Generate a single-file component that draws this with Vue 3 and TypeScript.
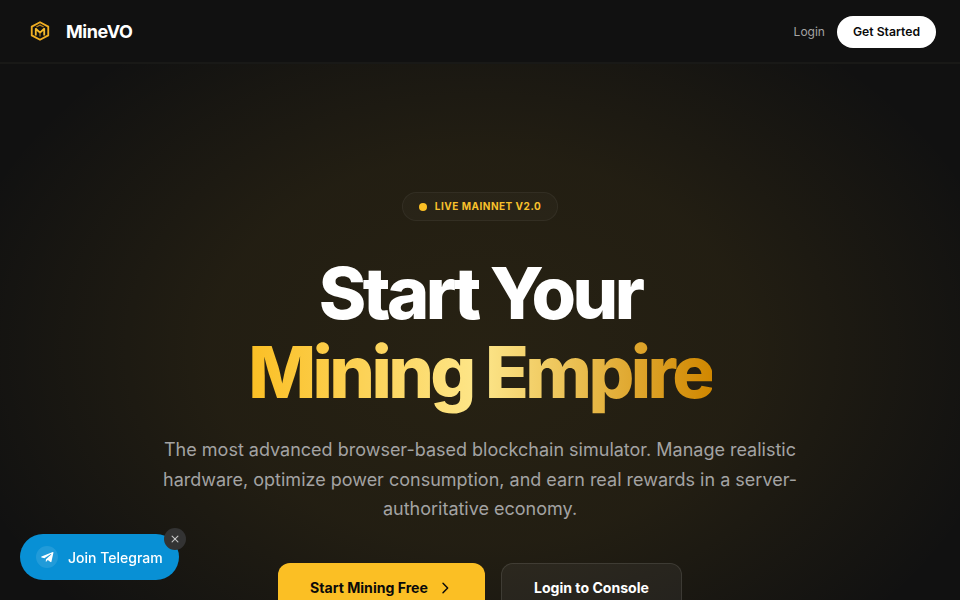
<template>
  <div class="page">
    <div class="glow"></div>
    <header class="nav">
      <a class="brand">
        <svg class="brand-logo" viewBox="0 0 24 24" fill="none">
          <path d="M12 2.5 21 7.2V16.8L12 21.5 3 16.8V7.2Z" stroke="#f0ae22" stroke-width="2" stroke-linejoin="round" />
          <path d="M8 7.6 12 5.6l4 2" stroke="#b8821a" stroke-width="1.4" stroke-linejoin="round" />
          <path d="M7.4 17V9.6L12 13.8l4.6-4.2V17" stroke="#f5bb2c" stroke-width="2" stroke-linejoin="round" />
          <path d="M12 14v4" stroke="#a87614" stroke-width="1.4" />
        </svg>
        <span class="brand-name">MineVO</span>
      </a>
      <div class="nav-actions">
        <a class="nav-login">Login</a>
        <button class="nav-cta">Get Started</button>
      </div>
    </header>

    <main class="hero">
      <div class="badge">
        <span class="badge-dot"></span>
        <span>LIVE MAINNET V2.0</span>
      </div>
      <h1 class="title">
        Start Your<br />
        <span class="title-gold">Mining Empire</span>
      </h1>
      <p class="lead">
        The most advanced browser-based blockchain simulator. Manage realistic hardware, optimize power consumption, and earn real rewards in a server-authoritative economy.
      </p>
      <div class="cta-row">
        <button class="btn btn-primary">
          Start Mining Free
          <svg viewBox="0 0 24 24" width="16" height="16" fill="none" stroke="currentColor" stroke-width="2.2" stroke-linecap="round" stroke-linejoin="round">
            <path d="m9 5 7 7-7 7" />
          </svg>
        </button>
        <button class="btn btn-secondary">Login to Console</button>
      </div>
    </main>

    <div class="telegram">
      <a class="telegram-link">
        <span class="telegram-icon">
          <svg viewBox="0 0 24 24" width="14" height="14" fill="#fff">
            <path d="M22 3.6 2.6 11.1c-.8.3-.8 1.4.1 1.6l4.8 1.5L18.6 7c.5-.3 1 .1.6.5l-9 8.2-.3 4.4c.5 0 .8-.2 1-.5l2.4-2.3 4.7 3.4c.9.5 1.5.2 1.7-.8L23 4.7c.2-1-.3-1.4-1-1.1Z" />
          </svg>
        </span>
        Join Telegram
      </a>
      <button class="telegram-close" aria-label="Close">
        <svg viewBox="0 0 24 24" width="10" height="10" fill="none" stroke="currentColor" stroke-width="2.6" stroke-linecap="round">
          <path d="M5 5l14 14M19 5 5 19" />
        </svg>
      </button>
    </div>
  </div>
</template>

<script setup lang="ts">
</script>

<style>
body {
  background: #111111;
}
</style>

<style scoped>
.page {
  position: relative;
  min-height: 100vh;
  height: 600px;
  overflow: hidden;
  font-family: Inter, "Liberation Sans", sans-serif;
  color: #fff;
}

.glow {
  position: absolute;
  inset: 0;
  background: radial-gradient(ellipse 540px 390px at 50% 350px, rgba(251, 191, 36, 0.095), rgba(251, 191, 36, 0.075) 50%, rgba(251, 191, 36, 0) 100%);
  pointer-events: none;
}

.nav {
  position: relative;
  height: 64px;
  box-sizing: border-box;
  padding: 0 24px;
  display: flex;
  align-items: center;
  justify-content: space-between;
  background: #111111;
  box-shadow: inset 0 -2px 0 #191917;
}

.brand {
  display: flex;
  align-items: center;
  gap: 10px;
  padding-bottom: 2px;
}

.brand-logo {
  width: 32px;
  height: 22px;
}

.brand-name {
  font-size: 18px;
  font-weight: 700;
  letter-spacing: -0.025em;
}

.nav-actions {
  display: flex;
  align-items: center;
  gap: 12px;
}

.nav-login {
  padding-bottom: 1px;
  font-size: 12px;
  font-weight: 400;
  color: #a3a3a3;
}

.nav-cta {
  height: 32px;
  padding: 0 16px 2px;
  border: 0;
  border-radius: 999px;
  background: #fff;
  color: #0a0a0a;
  font: 600 12.2px Inter, sans-serif;
}

.hero {
  position: relative;
  display: flex;
  flex-direction: column;
  align-items: center;
  padding-top: 128px;
  text-align: center;
}

.badge {
  display: flex;
  align-items: center;
  gap: 8px;
  padding: 7px 16px;
  border: 1px solid rgba(255, 255, 255, 0.05);
  border-radius: 999px;
  background: rgba(255, 255, 255, 0.025);
  color: #f8c12c;
  font-size: 10px;
  font-weight: 700;
  line-height: 13px;
  letter-spacing: 0.05em;
}

.badge-dot {
  width: 8px;
  height: 8px;
  border-radius: 50%;
  background: #fbbf24;
}

.title {
  margin: 32px 0 0;
  font-size: 72px;
  font-weight: 800;
  line-height: 1.1;
  letter-spacing: -0.05em;
}

.title-gold {
  background: linear-gradient(90deg, #fbbf24, #fde68a 50%, #d08700);
  -webkit-background-clip: text;
  background-clip: text;
  color: transparent;
}

.lead {
  width: 672px;
  margin: 24px 0 0;
  color: #a3a3a3;
  font-size: 18px;
  line-height: 1.625;
}

.cta-row {
  display: flex;
  gap: 16px;
  margin-top: 40px;
}

.btn {
  display: flex;
  align-items: center;
  justify-content: center;
  gap: 9px;
  height: 49px;
  padding: 0 32px;
  border-radius: 12px;
  font: 700 14.1px Inter, sans-serif;
}

.btn-primary {
  border: 0;
  background: #fbbf24;
  color: #0a0a0a;
}

.btn-secondary {
  border: 1px solid rgba(255, 255, 255, 0.1);
  background: rgba(255, 255, 255, 0.05);
  color: #fff;
}

.telegram {
  position: fixed;
  left: 20px;
  bottom: 20px;
}

.telegram-link {
  display: flex;
  align-items: center;
  gap: 10px;
  height: 46px;
  box-sizing: border-box;
  padding: 0 16px;
  border-radius: 999px;
  background: #0890d5;
  color: #fff;
  font-size: 14px;
  font-weight: 500;
}

.telegram-icon {
  display: flex;
  align-items: center;
  justify-content: center;
  width: 22px;
  height: 22px;
  border-radius: 50%;
  background: rgba(255, 255, 255, 0.1);
}

.telegram-close {
  position: absolute;
  top: -6px;
  right: -7px;
  display: flex;
  align-items: center;
  justify-content: center;
  width: 22px;
  height: 22px;
  padding: 0;
  border: 0;
  border-radius: 50%;
  background: #333333;
  color: #c4c4c4;
}
</style>
